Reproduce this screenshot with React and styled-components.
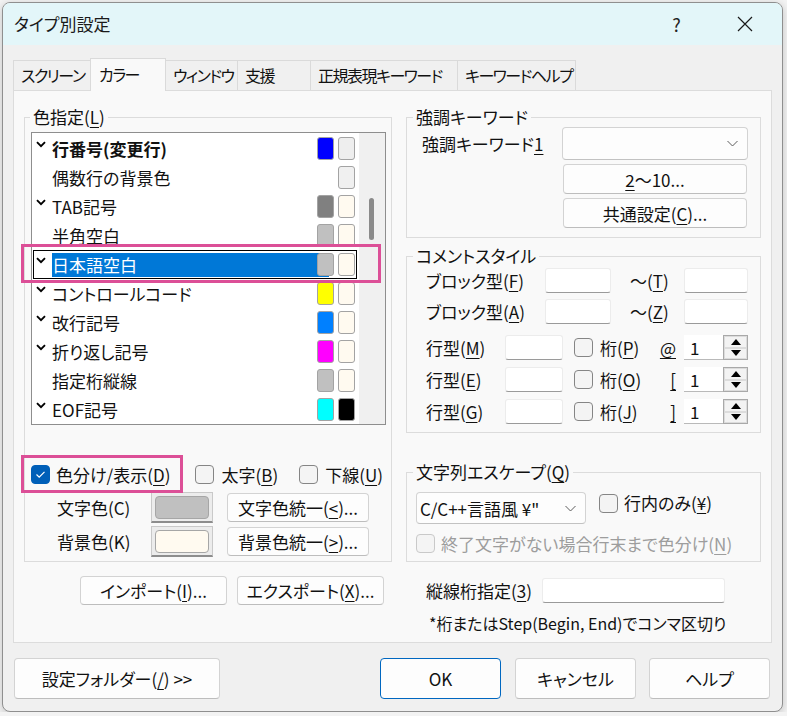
import React from "react";
import styled, { createGlobalStyle, css } from "styled-components";

const GlobalStyle = createGlobalStyle`
  html, body { margin: 0; padding: 0; }
  body {
    background: #f3f3f3;
    font-family: "Noto Sans CJK JP", "Noto Sans", sans-serif;
    font-feature-settings: "palt";
    font-size: 17px;
    color: #111;
  }
  * { box-sizing: border-box; }
`;

const Window = styled.div`
  position: relative;
  width: 781px;
  height: 710px;
  margin: 2px 0 0 2px;
  border: 1px solid #8f8f8f;
  border-radius: 8px;
  overflow: hidden;
  background: #f0f0f0;
  display: flex;
  flex-direction: column;
  box-shadow: 0 2px 8px rgba(0, 0, 0, 0.2);
`;

const TitleBar = styled.div`
  height: 42px;
  flex: none;
  display: flex;
  align-items: center;
  padding-left: 11px;
  background: #e3f6f9;
  color: #1a1a1a;
  line-height: 20px;
`;

const TitleButton = styled.div`
  width: 46px;
  height: 42px;
  display: flex;
  align-items: center;
  justify-content: center;
  margin-left: ${(p) => p.$ml || 0}px;
  font-size: 18px;
  color: #222;
`;

const Body = styled.div`
  flex: 1;
  padding: 15px 10px 0;
  display: flex;
  flex-direction: column;
`;

const TabStrip = styled.div`
  height: 30px;
  display: flex;
  align-items: flex-end;
`;

const Tab = styled.div`
  width: ${(p) => p.$w}px;
  height: 30px;
  margin-left: -1px;
  padding-left: 7px;
  line-height: 29px;
  font-size: 16px;
  letter-spacing: -1.5px;
  background: #f0f0f0;
  border: 1px solid #dadada;
  border-bottom: none;
  white-space: nowrap;
  overflow: hidden;
  &:first-child { margin-left: 0; }
  ${(p) =>
    p.$active &&
    css`
      position: relative;
      z-index: 1;
      height: 33px;
      margin-bottom: -1px;
      padding-left: 8px;
      line-height: 30px;
      background: #f9f9f9;
    `}
`;

const Panel = styled.div`
  height: 553px;
  border: 1px solid #dcdcdc;
  background: #f9f9f9;
  display: flex;
  gap: 14px;
  padding: 16px 10px 0;
`;

const Column = styled.div`
  width: ${(p) => p.$w}px;
  display: flex;
  flex-direction: column;
`;

const Group = styled.fieldset`
  margin: ${(p) => p.$mt || 0}px 0 0;
  min-width: 0;
  border: 1px solid #dcdcdc;
  padding: ${(p) => p.$pad};
`;

const Legend = styled.legend`
  padding: 0 3px;
  margin-left: ${(p) => p.$ml}px;
  line-height: 20px;
  color: #111;
`;

const U = styled.span`
  text-decoration: underline;
  text-underline-offset: 3px;
  text-decoration-thickness: 1px;
`;

/* ---------- list ---------- */

const ListBox = styled.div`
  height: 293px;
  border: 1px solid #8e8e8e;
  background: #fff;
  display: flex;
`;

const Rows = styled.div`
  width: 327px;
  padding-top: 1px;
`;

const Row = styled.div`
  position: relative;
  height: 29px;
  display: flex;
  align-items: center;
  ${(p) =>
    p.$focus &&
    css`
      &::after {
        content: "";
        position: absolute;
        left: 1px;
        right: 2px;
        top: 0;
        bottom: 0;
        border: 1px solid #000;
      }
    `}
`;

const CheckCell = styled.div`
  width: 20px;
  align-self: flex-start;
  padding: 7px 0 0 4px;
  line-height: 0;
`;

const RowLabel = styled.div`
  width: 277px;
  height: 24px;
  line-height: 24px;
  white-space: nowrap;
  font-weight: ${(p) => (p.$bold ? 700 : 400)};
  ${(p) =>
    p.$selected &&
    css`
      background: #0078d7;
      color: #fff;
    `}
`;

const Swatches = styled.div`
  display: flex;
  gap: 4px;
  margin-left: -12px;
  position: relative;
`;

const Swatch = styled.div`
  width: 17px;
  height: 23px;
  border-radius: 3px;
  border: 1px solid ${(p) => (p.$empty ? "transparent" : "#a3a3a3")};
  background: ${(p) => p.$c || "transparent"};
`;

const ScrollTrack = styled.div`
  width: 26px;
  background: #f0f0f0;
  padding: 65px 0 0 10px;
`;

const Thumb = styled.div`
  width: 5px;
  height: 42px;
  border-radius: 3px;
  background: #8a8a8a;
`;

/* ---------- controls ---------- */

const Line = styled.div`
  display: flex;
  align-items: center;
  height: ${(p) => p.$h || 25}px;
  margin-top: ${(p) => p.$mt || 0}px;
  padding-left: ${(p) => p.$pl || 0}px;
`;

const Label = styled.div`
  width: ${(p) => (p.$w ? `${p.$w}px` : "auto")};
  flex: none;
  margin-left: ${(p) => p.$ml || 0}px;
  padding-left: ${(p) => p.$pl || 0}px;
  white-space: nowrap;
  text-align: ${(p) => p.$align || "left"};
  padding-right: ${(p) => p.$pr || 0}px;
  color: ${(p) => (p.$disabled ? "#9d9d9d" : "#111")};
  ${(p) =>
    p.$top &&
    css`
      align-self: flex-start;
      line-height: 22px;
    `}
`;

const Box = styled.div`
  width: 19px;
  height: 19px;
  flex: none;
  margin-left: ${(p) => p.$ml || 0}px;
  align-self: ${(p) => (p.$top ? "flex-start" : "center")};
  margin-top: ${(p) => p.$mt || 0}px;
  border-radius: 4px;
  border: 1px solid ${(p) => (p.$disabled ? "#c9c9c9" : "#858585")};
  background: ${(p) => (p.$checked ? "#005fb8" : "#f4f4f4")};
  ${(p) => p.$checked && css`border-color: #005fb8;`}
  display: flex;
  align-items: center;
  justify-content: center;
`;

const Button = styled.div`
  width: ${(p) => p.$w}px;
  height: ${(p) => p.$h || 30}px;
  flex: none;
  margin-left: ${(p) => p.$ml || 0}px;
  margin-top: ${(p) => p.$mt || 0}px;
  display: flex;
  align-items: center;
  justify-content: center;
  white-space: nowrap;
  background: #fdfdfd;
  border: 1px solid ${(p) => (p.$default ? "#0067c0" : "#d3d3d3")};
  border-bottom-color: ${(p) => (p.$default ? "#0067c0" : "#bdbdbd")};
  border-radius: 4px;
  color: #111;
`;

const Field = styled.div`
  width: ${(p) => p.$w}px;
  height: 25px;
  flex: none;
  margin-left: ${(p) => p.$ml || 0}px;
  background: #fff;
  border: 1px solid #ececec;
  border-bottom-color: #9a9a9a;
  border-radius: 3px;
`;

const Combo = styled.div`
  width: ${(p) => p.$w}px;
  height: ${(p) => p.$h}px;
  flex: none;
  display: flex;
  align-items: center;
  justify-content: space-between;
  padding: 0 9px 0 3px;
  background: #fdfdfd;
  border: 1px solid #d3d3d3;
  border-bottom-color: #c2c2c2;
  border-radius: 4px;
  white-space: nowrap;
`;

const ColorButton = styled.div`
  width: 62px;
  height: 31px;
  flex: none;
  padding: 3px 3px 2px;
  background: #ececec;
  border: 1px solid #c9c9c9;
  border-bottom: 2px solid #8d8d8d;
`;

const ColorFill = styled.div`
  height: 100%;
  border-radius: 4px;
  border: 1px solid #a6a6a6;
  background: ${(p) => p.$c};
`;

const Spin = styled.div`
  display: flex;
  width: 64px;
  height: 25px;
  flex: none;
`;

const SpinEdit = styled.div`
  flex: 1;
  background: #fff;
  border-bottom: 1px solid #b9b9b9;
  padding-left: 6px;
  line-height: 25px;
`;

const SpinButtons = styled.div`
  width: 25px;
  border: 1px solid #a9a9a9;
  display: flex;
  flex-direction: column;
  background: #ececec;
`;

const SpinButton = styled.div`
  flex: 1;
  border: 1px solid #dcdcdc;
  background: #f3f3f3;
  display: flex;
  align-items: center;
  justify-content: center;
  line-height: 0;
`;

const Note = styled.div`
  margin-top: 8px;
  padding-left: 23px;
  line-height: 24px;
  font-size: 16px;
  white-space: nowrap;
`;

const Footer = styled.div`
  display: flex;
  margin-top: 15px;
  padding: 0 2px 0 1px;
`;

const Highlight = styled.div`
  position: absolute;
  left: ${(p) => p.$x}px;
  top: ${(p) => p.$y}px;
  width: ${(p) => p.$w}px;
  height: ${(p) => p.$h}px;
  border: 3px solid #dc4f97;
  pointer-events: none;
  z-index: 5;
`;

/* ---------- icons ---------- */

const ListCheck = () => (
  <svg width="10" height="7" viewBox="0 0 10 7">
    <polyline points="1,1.2 5,5.2 9,1.2" fill="none" stroke="#000" strokeWidth="1.9" />
  </svg>
);

const Tick = () => (
  <svg width="11" height="9" viewBox="0 0 11 9">
    <polyline points="1.5,4.5 4.2,7.2 9.5,1.8" fill="none" stroke="#fff" strokeWidth="1.2" />
  </svg>
);

const Chevron = () => (
  <svg width="11" height="7" viewBox="0 0 11 7">
    <polyline points="0.5,1 5.5,6 10.5,1" fill="none" stroke="#5c5c5c" strokeWidth="1" />
  </svg>
);

const Tri = ({ down }) => (
  <svg width="10" height="6" viewBox="0 0 10 6">
    <polygon points={down ? "0,0 10,0 5,6" : "5,0 10,6 0,6"} fill="#000" />
  </svg>
);

const CloseIcon = () => (
  <svg width="16" height="16" viewBox="0 0 16 16">
    <path d="M1 1L15 15M15 1L1 15" stroke="#1a1a1a" strokeWidth="1.2" />
  </svg>
);

/* ---------- data ---------- */

const tabs = [
  { label: "スクリーン", w: 78 },
  { label: "カラー", w: 76, active: true },
  { label: "ウィンドウ", w: 73 },
  { label: "支援", w: 74 },
  { label: "正規表現キーワード", w: 148 },
  { label: "キーワードヘルプ", w: 119 },
];

const CREAM = "#fffaf0";
const colorRows = [
  { label: "行番号(変更行)", check: true, fg: "#0000ff", bg: "#eeeeee", bold: true },
  { label: "偶数行の背景色", check: false, fg: null, bg: "#f0f0f0" },
  { label: "TAB記号", check: true, fg: "#808080", bg: CREAM },
  { label: "半角空白", check: false, fg: "#c0c0c0", bg: CREAM },
  { label: "日本語空白", check: true, fg: "#c0c0c0", bg: CREAM, selected: true },
  { label: "コントロールコード", check: true, fg: "#ffff00", bg: CREAM },
  { label: "改行記号", check: true, fg: "#0080ff", bg: CREAM },
  { label: "折り返し記号", check: true, fg: "#ff00ff", bg: CREAM },
  { label: "指定桁縦線", check: false, fg: "#c0c0c0", bg: CREAM },
  { label: "EOF記号", check: true, fg: "#00ffff", bg: "#000000" },
];

const lineRows = [
  { key: "M", col: "P", mark: "@", mt: 11 },
  { key: "E", col: "O", mark: "[", mt: 7 },
  { key: "G", col: "J", mark: "]", mt: 7 },
];

const Spinner = () => (
  <Spin>
    <SpinEdit>1</SpinEdit>
    <SpinButtons>
      <SpinButton><Tri /></SpinButton>
      <SpinButton><Tri down /></SpinButton>
    </SpinButtons>
  </Spin>
);

export default function App() {
  return (
    <>
      <GlobalStyle />
      <Window>
        <TitleBar>
          タイプ別設定
          <TitleButton $ml={543}>?</TitleButton>
          <TitleButton $ml={23}><CloseIcon /></TitleButton>
        </TitleBar>

        <Body>
          <TabStrip>
            {tabs.map((t) => (
              <Tab key={t.label} $w={t.w} $active={t.active}>{t.label}</Tab>
            ))}
          </TabStrip>

          <Panel>
            <Column $w={368}>
              <Group $pad="5px 5px 4px 6px">
                <Legend $ml={-1}>色指定(<U>L</U>)</Legend>
                <ListBox>
                  <Rows>
                    {colorRows.map((r) => (
                      <Row key={r.label} $focus={r.selected}>
                        <CheckCell>{r.check && <ListCheck />}</CheckCell>
                        <RowLabel $bold={r.bold} $selected={r.selected}>{r.label}</RowLabel>
                        <Swatches>
                          <Swatch $empty={!r.fg} $c={r.fg} />
                          <Swatch $c={r.bg} />
                        </Swatches>
                      </Row>
                    ))}
                  </Rows>
                  <ScrollTrack><Thumb /></ScrollTrack>
                </ListBox>

                <Line $h={30} $mt={34}>
                  <Box $checked><Tick /></Box>
                  <Label $ml={6}>色分け/表示(<U>D</U>)</Label>
                  <Box $ml={25} />
                  <Label $ml={7}>太字(<U>B</U>)</Label>
                  <Box $ml={21} />
                  <Label $ml={7}>下線(<U>U</U>)</Label>
                </Line>
                <Line $h={31} $mt={3}>
                  <Label $w={120} $pl={26}>文字色(C)</Label>
                  <ColorButton><ColorFill $c="#c0c0c0" /></ColorButton>
                  <Button $w={142} $h={29} $ml={14}>文字色統一(<U>&lt;</U>)...</Button>
                </Line>
                <Line $h={31} $mt={3}>
                  <Label $w={120} $pl={26}>背景色(K)</Label>
                  <ColorButton><ColorFill $c={CREAM} /></ColorButton>
                  <Button $w={142} $h={29} $ml={14}>背景色統一(<U>&gt;</U>)...</Button>
                </Line>
              </Group>

              <Line $h={29} $mt={14} $pl={56}>
                <Button $w={147} $h={29}>インポート(<U>I</U>)...</Button>
                <Button $w={147} $h={29} $ml={10}>エクスポート(<U>X</U>)...</Button>
              </Line>
            </Column>

            <Column $w={355}>
              <Group $pad="0 12px 9px 15px">
                <Legend $ml={-9}>強調キーワード</Legend>
                <Line $h={33}>
                  <Label $w={140}>強調キーワード<U>1</U></Label>
                  <Combo $w={186} $h={33}><span /><Chevron /></Combo>
                </Line>
                <Button $w={184} $ml={141} $mt={4}><U>2</U>〜10...</Button>
                <Button $w={184} $ml={141} $mt={4}>共通設定(<U>C</U>)...</Button>
              </Group>

              <Group $mt={8} $pad="2px 12px 8px 19px">
                <Legend $ml={-13}>コメントスタイル</Legend>
                <Line>
                  <Label $w={119}>ブロック型(<U>F</U>)</Label>
                  <Field $w={66} />
                  <Label $w={54} $ml={19}>〜(<U>T</U>)</Label>
                  <Field $w={64} />
                </Line>
                <Line $mt={6}>
                  <Label $w={119}>ブロック型(<U>A</U>)</Label>
                  <Field $w={66} />
                  <Label $w={54} $ml={19}>〜(<U>Z</U>)</Label>
                  <Field $w={64} />
                </Line>
                {lineRows.map((r) => (
                  <Line key={r.key} $mt={r.mt}>
                    <Label $w={79}>行型(<U>{r.key}</U>)</Label>
                    <Field $w={58} />
                    <Box $ml={11} />
                    <Label $w={59} $ml={7}>桁(<U>{r.col}</U>)</Label>
                    <Label $w={25} $align="right" $pr={8}><U>{r.mark}</U></Label>
                    <Spinner />
                  </Line>
                ))}
              </Group>

              <Group $mt={29} $pad="10px 12px 8px 9px">
                <Legend $ml={-3}>文字列エスケープ(<U>Q</U>)</Legend>
                <Line $h={32}>
                  <Combo $w={170} $h={32}>
                    <span>C/C++言語風 ¥"</span>
                    <Chevron />
                  </Combo>
                  <Box $ml={13} $top $mt={2} />
                  <Label $ml={6} $top>行内のみ(<U>¥</U>)</Label>
                </Line>
                <Line $h={19} $mt={10}>
                  <Box $disabled />
                  <Label $ml={6} $disabled>終了文字がない場合行末まで色分け(<U>N</U>)</Label>
                </Line>
              </Group>

              <Line $mt={16} $pl={20}>
                <Label $w={116}>縦線桁指定(<U>3</U>)</Label>
                <Field $w={183} />
              </Line>
              <Note>*桁またはStep(Begin, End)でコンマ区切り</Note>
            </Column>
          </Panel>

          <Footer>
            <Button $w={206} $h={41}>設定フォルダー(<U>/</U>) &gt;&gt;</Button>
            <Button $w={121} $h={41} $ml={160} $default>OK</Button>
            <Button $w={121} $h={41} $ml={14}>キャンセル</Button>
            <Button $w={121} $h={41} $ml={13}>ヘルプ</Button>
          </Footer>
        </Body>

        <Highlight $x={18} $y={241} $w={360} $h={39} />
        <Highlight $x={18} $y={452} $w={162} $h={38} />
      </Window>
    </>
  );
}
